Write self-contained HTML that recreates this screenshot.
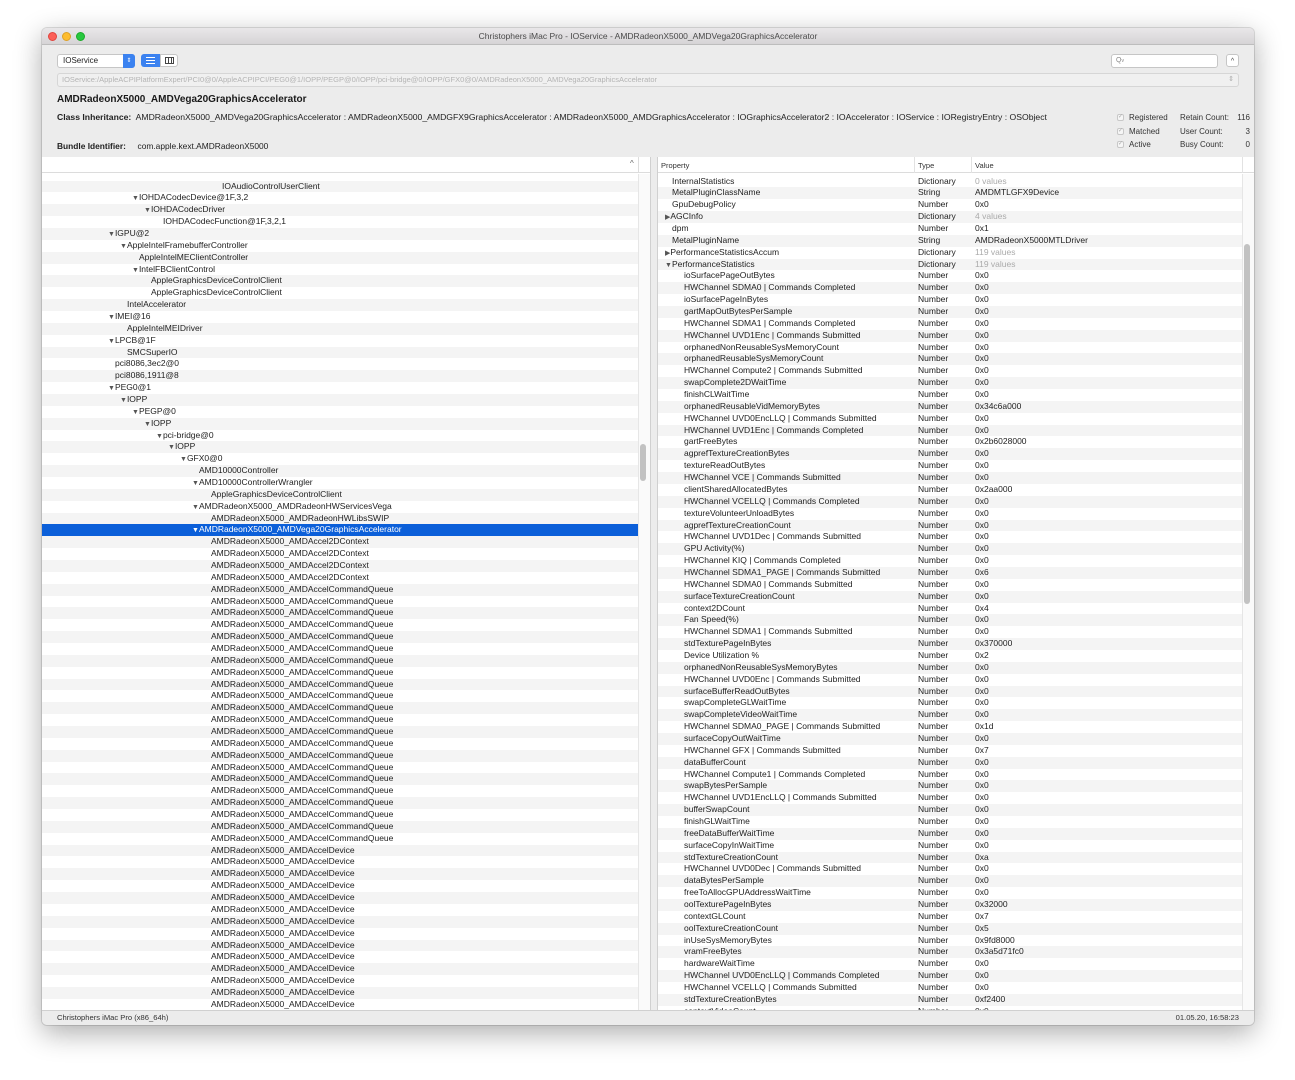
<!DOCTYPE html>
<html><head><meta charset="utf-8">
<style>
*{box-sizing:border-box}
body{margin:0;width:1295px;height:1080px;background:#fff;font-family:"Liberation Sans",sans-serif;overflow:hidden;position:relative}
.win{position:absolute;left:42px;top:28px;width:1212px;height:997px;border-radius:5px;background:#ececec;box-shadow:0 8px 28px rgba(0,0,0,.33),0 0 0 1px rgba(0,0,0,.12);overflow:hidden}
.tb{position:absolute;left:0;top:0;width:100%;height:17px;background:linear-gradient(#e9e7e9,#d6d4d6);border-bottom:1px solid #bdbdbd}
.dot{position:absolute;top:4px;width:9px;height:9px;border-radius:50%}
.ttl{position:absolute;left:0;right:0;top:3px;text-align:center;font-size:8.5px;color:#4a4a4a}
.a{position:absolute;white-space:nowrap}
.pane{position:absolute;top:129px;height:853px;background:#fff;overflow:hidden}
.hdr{position:absolute;left:0;top:0;width:100%;height:16px;background:#fff;border-bottom:1px solid #dcdcdc;font-size:7.5px;color:#333}
.rows{position:absolute;left:0;width:100%}
.r{height:11.87px;line-height:11.87px;font-size:8.5px;color:#222;white-space:nowrap;position:relative}
.r:nth-child(odd){background:#f4f4f4}
.r.sel{background:#0b5fd9 !important;color:#fff}
.r span{position:absolute}
.t{font-size:7px;color:#555;font-style:normal}
.sel .t{color:#fff}
.g{color:#aaa}
.ck{display:inline-block;width:7px;height:7px;border:1px solid #c8c8c8;border-radius:2px;background:#f6f6f6;font-size:6px;line-height:5px;color:#aaa;text-align:center;vertical-align:middle;margin-right:5px}
</style></head><body>
<div class="win">
 <div class="tb">
  <div class="dot" style="left:6px;background:#fc5f57;border:1px solid #e0443e"></div>
  <div class="dot" style="left:20px;background:#fdbc2e;border:1px solid #dea123"></div>
  <div class="dot" style="left:34px;background:#28c840;border:1px solid #1aab29"></div>
  <div class="ttl">Christophers iMac Pro - IOService - AMDRadeonX5000_AMDVega20GraphicsAccelerator</div>
 </div>
 <div class="a" style="left:15px;top:26px;width:78px;height:14px;background:#fff;border:1px solid #c6c6c6;border-radius:3px;font-size:8px;line-height:12px;padding-left:5px;color:#222">IOService</div>
 <div class="a" style="left:81px;top:26px;width:12px;height:14px;background:#3b82f0;border-radius:0 3px 3px 0;color:#fff;font-size:6px;line-height:14px;text-align:center">⇕</div>
 <div class="a" style="left:99px;top:26px;width:19px;height:13px;background:#3b82f0;border-radius:3px 0 0 3px;"><div style="position:absolute;left:5px;top:3px;width:9px;height:7px;border-top:1px solid #fff;border-bottom:1px solid #fff"><div style="margin-top:2px;border-top:1px solid #fff"></div></div></div>
 <div class="a" style="left:118px;top:26px;width:18px;height:13px;background:#fff;border:1px solid #c6c6c6;border-radius:0 3px 3px 0"><div style="position:absolute;left:4px;top:2px;width:9px;height:7px;border:1px solid #444"><div style="position:absolute;left:2px;top:0;height:5px;border-left:1px solid #444"></div><div style="position:absolute;left:5px;top:0;height:5px;border-left:1px solid #444"></div></div></div>
 <div class="a" style="left:15px;top:45px;width:1182px;height:14px;background:#f0f0f0;border:1px solid #d6d6d6;border-radius:3px;font-size:7.5px;line-height:12px;padding-left:4px;color:#b4b4b4">IOService:/AppleACPIPlatformExpert/PCI0@0/AppleACPIPCI/PEG0@1/IOPP/PEGP@0/IOPP/pci-bridge@0/IOPP/GFX0@0/AMDRadeonX5000_AMDVega20GraphicsAccelerator<span style="position:absolute;right:4px;color:#aaa;font-size:7px">⇕</span></div>
 <div class="a" style="left:1069px;top:26px;width:107px;height:14px;background:#fff;border:1px solid #c6c6c6;border-radius:3px;font-size:7px;line-height:12px;padding-left:4px;color:#888">Q<span style="font-size:5px">v</span></div>
 <div class="a" style="left:1184px;top:26px;width:13px;height:13px;background:#fff;border:1px solid #c6c6c6;border-radius:3px;font-size:7px;line-height:13px;text-align:center;color:#444">^</div>
 <div class="a" style="left:15px;top:66px;font-size:10px;font-weight:bold;color:#1a1a1a">AMDRadeonX5000_AMDVega20GraphicsAccelerator</div>
 <div class="a" style="left:15px;top:84px;font-size:8.65px;color:#222"><b>Class Inheritance:</b>&nbsp; AMDRadeonX5000_AMDVega20GraphicsAccelerator : AMDRadeonX5000_AMDGFX9GraphicsAccelerator : AMDRadeonX5000_AMDGraphicsAccelerator : IOGraphicsAccelerator2 : IOAccelerator : IOService : IORegistryEntry : OSObject</div>
 <div class="a" style="left:15px;top:113px;font-size:8.4px;color:#222"><b>Bundle Identifier:</b>&nbsp;&nbsp;&nbsp;&nbsp; com.apple.kext.AMDRadeonX5000</div>
 <div class="a" style="left:1075px;top:83px;font-size:8px;color:#333;line-height:13.5px"><span class="ck">✓</span>Registered<br><span class="ck">✓</span>Matched<br><span class="ck">✓</span>Active</div>
 <div class="a" style="left:1138px;top:83px;font-size:8px;color:#333;line-height:13.5px;width:70px">Retain Count:<span style="position:absolute;right:0">116</span><br>User Count:<span style="position:absolute;right:0;top:13.5px">3</span><br>Busy Count:<span style="position:absolute;right:0;top:27px">0</span></div>

 <div class="pane" style="left:0;width:608px">
  <div class="hdr"><span class="a" style="left:588px;top:2px;font-size:8px;color:#666">^</span><span class="a" style="left:596px;top:0;height:16px;border-left:1px solid #ddd"></span></div>
  <div class="a" style="left:596px;top:17px;width:12px;height:836px;background:#fafafa;border-left:1px solid #e6e6e6"></div>
  <div class="a" style="left:598px;top:287px;width:6px;height:37px;background:#c2c2c2;border-radius:3px"></div>
  <div style="position:absolute;left:0;top:17px;width:596px;height:836px;overflow:hidden">
  <div class="rows" style="top:6.5px">
<div class="r"><span style="left:180px">IOAudioControlUserClient</span></div>
<div class="r"><span style="left:90px"><i class="t">▼</i>IOHDACodecDevice@1F,3,2</span></div>
<div class="r"><span style="left:102px"><i class="t">▼</i>IOHDACodecDriver</span></div>
<div class="r"><span style="left:121px">IOHDACodecFunction@1F,3,2,1</span></div>
<div class="r"><span style="left:66px"><i class="t">▼</i>IGPU@2</span></div>
<div class="r"><span style="left:78px"><i class="t">▼</i>AppleIntelFramebufferController</span></div>
<div class="r"><span style="left:97px">AppleIntelMEClientController</span></div>
<div class="r"><span style="left:90px"><i class="t">▼</i>IntelFBClientControl</span></div>
<div class="r"><span style="left:109px">AppleGraphicsDeviceControlClient</span></div>
<div class="r"><span style="left:109px">AppleGraphicsDeviceControlClient</span></div>
<div class="r"><span style="left:85px">IntelAccelerator</span></div>
<div class="r"><span style="left:66px"><i class="t">▼</i>IMEI@16</span></div>
<div class="r"><span style="left:85px">AppleIntelMEIDriver</span></div>
<div class="r"><span style="left:66px"><i class="t">▼</i>LPCB@1F</span></div>
<div class="r"><span style="left:85px">SMCSuperIO</span></div>
<div class="r"><span style="left:73px">pci8086,3ec2@0</span></div>
<div class="r"><span style="left:73px">pci8086,1911@8</span></div>
<div class="r"><span style="left:66px"><i class="t">▼</i>PEG0@1</span></div>
<div class="r"><span style="left:78px"><i class="t">▼</i>IOPP</span></div>
<div class="r"><span style="left:90px"><i class="t">▼</i>PEGP@0</span></div>
<div class="r"><span style="left:102px"><i class="t">▼</i>IOPP</span></div>
<div class="r"><span style="left:114px"><i class="t">▼</i>pci-bridge@0</span></div>
<div class="r"><span style="left:126px"><i class="t">▼</i>IOPP</span></div>
<div class="r"><span style="left:138px"><i class="t">▼</i>GFX0@0</span></div>
<div class="r"><span style="left:157px">AMD10000Controller</span></div>
<div class="r"><span style="left:150px"><i class="t">▼</i>AMD10000ControllerWrangler</span></div>
<div class="r"><span style="left:169px">AppleGraphicsDeviceControlClient</span></div>
<div class="r"><span style="left:150px"><i class="t">▼</i>AMDRadeonX5000_AMDRadeonHWServicesVega</span></div>
<div class="r"><span style="left:169px">AMDRadeonX5000_AMDRadeonHWLibsSWIP</span></div>
<div class="r sel"><span style="left:150px"><i class="t">▼</i>AMDRadeonX5000_AMDVega20GraphicsAccelerator</span></div>
<div class="r"><span style="left:169px">AMDRadeonX5000_AMDAccel2DContext</span></div>
<div class="r"><span style="left:169px">AMDRadeonX5000_AMDAccel2DContext</span></div>
<div class="r"><span style="left:169px">AMDRadeonX5000_AMDAccel2DContext</span></div>
<div class="r"><span style="left:169px">AMDRadeonX5000_AMDAccel2DContext</span></div>
<div class="r"><span style="left:169px">AMDRadeonX5000_AMDAccelCommandQueue</span></div>
<div class="r"><span style="left:169px">AMDRadeonX5000_AMDAccelCommandQueue</span></div>
<div class="r"><span style="left:169px">AMDRadeonX5000_AMDAccelCommandQueue</span></div>
<div class="r"><span style="left:169px">AMDRadeonX5000_AMDAccelCommandQueue</span></div>
<div class="r"><span style="left:169px">AMDRadeonX5000_AMDAccelCommandQueue</span></div>
<div class="r"><span style="left:169px">AMDRadeonX5000_AMDAccelCommandQueue</span></div>
<div class="r"><span style="left:169px">AMDRadeonX5000_AMDAccelCommandQueue</span></div>
<div class="r"><span style="left:169px">AMDRadeonX5000_AMDAccelCommandQueue</span></div>
<div class="r"><span style="left:169px">AMDRadeonX5000_AMDAccelCommandQueue</span></div>
<div class="r"><span style="left:169px">AMDRadeonX5000_AMDAccelCommandQueue</span></div>
<div class="r"><span style="left:169px">AMDRadeonX5000_AMDAccelCommandQueue</span></div>
<div class="r"><span style="left:169px">AMDRadeonX5000_AMDAccelCommandQueue</span></div>
<div class="r"><span style="left:169px">AMDRadeonX5000_AMDAccelCommandQueue</span></div>
<div class="r"><span style="left:169px">AMDRadeonX5000_AMDAccelCommandQueue</span></div>
<div class="r"><span style="left:169px">AMDRadeonX5000_AMDAccelCommandQueue</span></div>
<div class="r"><span style="left:169px">AMDRadeonX5000_AMDAccelCommandQueue</span></div>
<div class="r"><span style="left:169px">AMDRadeonX5000_AMDAccelCommandQueue</span></div>
<div class="r"><span style="left:169px">AMDRadeonX5000_AMDAccelCommandQueue</span></div>
<div class="r"><span style="left:169px">AMDRadeonX5000_AMDAccelCommandQueue</span></div>
<div class="r"><span style="left:169px">AMDRadeonX5000_AMDAccelCommandQueue</span></div>
<div class="r"><span style="left:169px">AMDRadeonX5000_AMDAccelCommandQueue</span></div>
<div class="r"><span style="left:169px">AMDRadeonX5000_AMDAccelCommandQueue</span></div>
<div class="r"><span style="left:169px">AMDRadeonX5000_AMDAccelDevice</span></div>
<div class="r"><span style="left:169px">AMDRadeonX5000_AMDAccelDevice</span></div>
<div class="r"><span style="left:169px">AMDRadeonX5000_AMDAccelDevice</span></div>
<div class="r"><span style="left:169px">AMDRadeonX5000_AMDAccelDevice</span></div>
<div class="r"><span style="left:169px">AMDRadeonX5000_AMDAccelDevice</span></div>
<div class="r"><span style="left:169px">AMDRadeonX5000_AMDAccelDevice</span></div>
<div class="r"><span style="left:169px">AMDRadeonX5000_AMDAccelDevice</span></div>
<div class="r"><span style="left:169px">AMDRadeonX5000_AMDAccelDevice</span></div>
<div class="r"><span style="left:169px">AMDRadeonX5000_AMDAccelDevice</span></div>
<div class="r"><span style="left:169px">AMDRadeonX5000_AMDAccelDevice</span></div>
<div class="r"><span style="left:169px">AMDRadeonX5000_AMDAccelDevice</span></div>
<div class="r"><span style="left:169px">AMDRadeonX5000_AMDAccelDevice</span></div>
<div class="r"><span style="left:169px">AMDRadeonX5000_AMDAccelDevice</span></div>
<div class="r"><span style="left:169px">AMDRadeonX5000_AMDAccelDevice</span></div>
  </div></div>
 </div>
 <div class="a" style="left:608px;top:129px;width:8px;height:853px;background:#ececec;border-left:1px solid #d0d0d0;border-right:1px solid #d0d0d0"></div>

 <div class="pane" style="left:616px;width:596px">
  <div class="hdr"><span class="a" style="left:3px;top:4px">Property</span><span class="a" style="left:256px;top:0;height:16px;border-left:1px solid #e2e2e2"></span><span class="a" style="left:260px;top:4px">Type</span><span class="a" style="left:313px;top:0;height:16px;border-left:1px solid #e2e2e2"></span><span class="a" style="left:317px;top:4px">Value</span><span class="a" style="left:584px;top:0;height:16px;border-left:1px solid #e2e2e2"></span></div>
  <div class="a" style="left:584px;top:17px;width:12px;height:836px;background:#fafafa;border-left:1px solid #e6e6e6"></div>
  <div class="a" style="left:586px;top:87px;width:6px;height:360px;background:#c2c2c2;border-radius:3px"></div>
  <div style="position:absolute;left:0;top:17px;width:584px;height:836px;overflow:hidden">
  <div class="rows" style="top:1.5px">
<div class="r" style="background:#fff"><span style="left:14px">InternalStatistics</span><span style="left:260px">Dictionary</span><span class="g" style="left:317px">0 values</span></div>
<div class="r" style="background:#f4f4f4"><span style="left:14px">MetalPluginClassName</span><span style="left:260px">String</span><span style="left:317px">AMDMTLGFX9Device</span></div>
<div class="r" style="background:#fff"><span style="left:14px">GpuDebugPolicy</span><span style="left:260px">Number</span><span style="left:317px">0x0</span></div>
<div class="r" style="background:#f4f4f4"><span style="left:7px"><i class="t">▶</i>AGCInfo</span><span style="left:260px">Dictionary</span><span class="g" style="left:317px">4 values</span></div>
<div class="r" style="background:#fff"><span style="left:14px">dpm</span><span style="left:260px">Number</span><span style="left:317px">0x1</span></div>
<div class="r" style="background:#f4f4f4"><span style="left:14px">MetalPluginName</span><span style="left:260px">String</span><span style="left:317px">AMDRadeonX5000MTLDriver</span></div>
<div class="r" style="background:#fff"><span style="left:7px"><i class="t">▶</i>PerformanceStatisticsAccum</span><span style="left:260px">Dictionary</span><span class="g" style="left:317px">119 values</span></div>
<div class="r" style="background:#f4f4f4"><span style="left:7px"><i class="t">▼</i>PerformanceStatistics</span><span style="left:260px">Dictionary</span><span class="g" style="left:317px">119 values</span></div>
  </div>
  <div class="rows" style="top:96.46px">
<div class="r" style="background:#fff"><span style="left:26px">ioSurfacePageOutBytes</span><span style="left:260px">Number</span><span style="left:317px">0x0</span></div>
<div class="r" style="background:#f4f4f4"><span style="left:26px">HWChannel SDMA0 | Commands Completed</span><span style="left:260px">Number</span><span style="left:317px">0x0</span></div>
<div class="r" style="background:#fff"><span style="left:26px">ioSurfacePageInBytes</span><span style="left:260px">Number</span><span style="left:317px">0x0</span></div>
<div class="r" style="background:#f4f4f4"><span style="left:26px">gartMapOutBytesPerSample</span><span style="left:260px">Number</span><span style="left:317px">0x0</span></div>
<div class="r" style="background:#fff"><span style="left:26px">HWChannel SDMA1 | Commands Completed</span><span style="left:260px">Number</span><span style="left:317px">0x0</span></div>
<div class="r" style="background:#f4f4f4"><span style="left:26px">HWChannel UVD1Enc | Commands Submitted</span><span style="left:260px">Number</span><span style="left:317px">0x0</span></div>
<div class="r" style="background:#fff"><span style="left:26px">orphanedNonReusableSysMemoryCount</span><span style="left:260px">Number</span><span style="left:317px">0x0</span></div>
<div class="r" style="background:#f4f4f4"><span style="left:26px">orphanedReusableSysMemoryCount</span><span style="left:260px">Number</span><span style="left:317px">0x0</span></div>
<div class="r" style="background:#fff"><span style="left:26px">HWChannel Compute2 | Commands Submitted</span><span style="left:260px">Number</span><span style="left:317px">0x0</span></div>
<div class="r" style="background:#f4f4f4"><span style="left:26px">swapComplete2DWaitTime</span><span style="left:260px">Number</span><span style="left:317px">0x0</span></div>
<div class="r" style="background:#fff"><span style="left:26px">finishCLWaitTime</span><span style="left:260px">Number</span><span style="left:317px">0x0</span></div>
<div class="r" style="background:#f4f4f4"><span style="left:26px">orphanedReusableVidMemoryBytes</span><span style="left:260px">Number</span><span style="left:317px">0x34c6a000</span></div>
<div class="r" style="background:#fff"><span style="left:26px">HWChannel UVD0EncLLQ | Commands Submitted</span><span style="left:260px">Number</span><span style="left:317px">0x0</span></div>
<div class="r" style="background:#f4f4f4"><span style="left:26px">HWChannel UVD1Enc | Commands Completed</span><span style="left:260px">Number</span><span style="left:317px">0x0</span></div>
<div class="r" style="background:#fff"><span style="left:26px">gartFreeBytes</span><span style="left:260px">Number</span><span style="left:317px">0x2b6028000</span></div>
<div class="r" style="background:#f4f4f4"><span style="left:26px">agprefTextureCreationBytes</span><span style="left:260px">Number</span><span style="left:317px">0x0</span></div>
<div class="r" style="background:#fff"><span style="left:26px">textureReadOutBytes</span><span style="left:260px">Number</span><span style="left:317px">0x0</span></div>
<div class="r" style="background:#f4f4f4"><span style="left:26px">HWChannel VCE | Commands Submitted</span><span style="left:260px">Number</span><span style="left:317px">0x0</span></div>
<div class="r" style="background:#fff"><span style="left:26px">clientSharedAllocatedBytes</span><span style="left:260px">Number</span><span style="left:317px">0x2aa000</span></div>
<div class="r" style="background:#f4f4f4"><span style="left:26px">HWChannel VCELLQ | Commands Completed</span><span style="left:260px">Number</span><span style="left:317px">0x0</span></div>
<div class="r" style="background:#fff"><span style="left:26px">textureVolunteerUnloadBytes</span><span style="left:260px">Number</span><span style="left:317px">0x0</span></div>
<div class="r" style="background:#f4f4f4"><span style="left:26px">agprefTextureCreationCount</span><span style="left:260px">Number</span><span style="left:317px">0x0</span></div>
<div class="r" style="background:#fff"><span style="left:26px">HWChannel UVD1Dec | Commands Submitted</span><span style="left:260px">Number</span><span style="left:317px">0x0</span></div>
<div class="r" style="background:#f4f4f4"><span style="left:26px">GPU Activity(%)</span><span style="left:260px">Number</span><span style="left:317px">0x0</span></div>
<div class="r" style="background:#fff"><span style="left:26px">HWChannel KIQ | Commands Completed</span><span style="left:260px">Number</span><span style="left:317px">0x0</span></div>
<div class="r" style="background:#f4f4f4"><span style="left:26px">HWChannel SDMA1_PAGE | Commands Submitted</span><span style="left:260px">Number</span><span style="left:317px">0x6</span></div>
<div class="r" style="background:#fff"><span style="left:26px">HWChannel SDMA0 | Commands Submitted</span><span style="left:260px">Number</span><span style="left:317px">0x0</span></div>
<div class="r" style="background:#f4f4f4"><span style="left:26px">surfaceTextureCreationCount</span><span style="left:260px">Number</span><span style="left:317px">0x0</span></div>
<div class="r" style="background:#fff"><span style="left:26px">context2DCount</span><span style="left:260px">Number</span><span style="left:317px">0x4</span></div>
<div class="r" style="background:#f4f4f4"><span style="left:26px">Fan Speed(%)</span><span style="left:260px">Number</span><span style="left:317px">0x0</span></div>
<div class="r" style="background:#fff"><span style="left:26px">HWChannel SDMA1 | Commands Submitted</span><span style="left:260px">Number</span><span style="left:317px">0x0</span></div>
<div class="r" style="background:#f4f4f4"><span style="left:26px">stdTexturePageInBytes</span><span style="left:260px">Number</span><span style="left:317px">0x370000</span></div>
<div class="r" style="background:#fff"><span style="left:26px">Device Utilization %</span><span style="left:260px">Number</span><span style="left:317px">0x2</span></div>
<div class="r" style="background:#f4f4f4"><span style="left:26px">orphanedNonReusableSysMemoryBytes</span><span style="left:260px">Number</span><span style="left:317px">0x0</span></div>
<div class="r" style="background:#fff"><span style="left:26px">HWChannel UVD0Enc | Commands Submitted</span><span style="left:260px">Number</span><span style="left:317px">0x0</span></div>
<div class="r" style="background:#f4f4f4"><span style="left:26px">surfaceBufferReadOutBytes</span><span style="left:260px">Number</span><span style="left:317px">0x0</span></div>
<div class="r" style="background:#fff"><span style="left:26px">swapCompleteGLWaitTime</span><span style="left:260px">Number</span><span style="left:317px">0x0</span></div>
<div class="r" style="background:#f4f4f4"><span style="left:26px">swapCompleteVideoWaitTime</span><span style="left:260px">Number</span><span style="left:317px">0x0</span></div>
<div class="r" style="background:#fff"><span style="left:26px">HWChannel SDMA0_PAGE | Commands Submitted</span><span style="left:260px">Number</span><span style="left:317px">0x1d</span></div>
<div class="r" style="background:#f4f4f4"><span style="left:26px">surfaceCopyOutWaitTime</span><span style="left:260px">Number</span><span style="left:317px">0x0</span></div>
<div class="r" style="background:#fff"><span style="left:26px">HWChannel GFX | Commands Submitted</span><span style="left:260px">Number</span><span style="left:317px">0x7</span></div>
<div class="r" style="background:#f4f4f4"><span style="left:26px">dataBufferCount</span><span style="left:260px">Number</span><span style="left:317px">0x0</span></div>
<div class="r" style="background:#fff"><span style="left:26px">HWChannel Compute1 | Commands Completed</span><span style="left:260px">Number</span><span style="left:317px">0x0</span></div>
<div class="r" style="background:#f4f4f4"><span style="left:26px">swapBytesPerSample</span><span style="left:260px">Number</span><span style="left:317px">0x0</span></div>
<div class="r" style="background:#fff"><span style="left:26px">HWChannel UVD1EncLLQ | Commands Submitted</span><span style="left:260px">Number</span><span style="left:317px">0x0</span></div>
<div class="r" style="background:#f4f4f4"><span style="left:26px">bufferSwapCount</span><span style="left:260px">Number</span><span style="left:317px">0x0</span></div>
<div class="r" style="background:#fff"><span style="left:26px">finishGLWaitTime</span><span style="left:260px">Number</span><span style="left:317px">0x0</span></div>
<div class="r" style="background:#f4f4f4"><span style="left:26px">freeDataBufferWaitTime</span><span style="left:260px">Number</span><span style="left:317px">0x0</span></div>
<div class="r" style="background:#fff"><span style="left:26px">surfaceCopyInWaitTime</span><span style="left:260px">Number</span><span style="left:317px">0x0</span></div>
<div class="r" style="background:#f4f4f4"><span style="left:26px">stdTextureCreationCount</span><span style="left:260px">Number</span><span style="left:317px">0xa</span></div>
<div class="r" style="background:#fff"><span style="left:26px">HWChannel UVD0Dec | Commands Submitted</span><span style="left:260px">Number</span><span style="left:317px">0x0</span></div>
<div class="r" style="background:#f4f4f4"><span style="left:26px">dataBytesPerSample</span><span style="left:260px">Number</span><span style="left:317px">0x0</span></div>
<div class="r" style="background:#fff"><span style="left:26px">freeToAllocGPUAddressWaitTime</span><span style="left:260px">Number</span><span style="left:317px">0x0</span></div>
<div class="r" style="background:#f4f4f4"><span style="left:26px">oolTexturePageInBytes</span><span style="left:260px">Number</span><span style="left:317px">0x32000</span></div>
<div class="r" style="background:#fff"><span style="left:26px">contextGLCount</span><span style="left:260px">Number</span><span style="left:317px">0x7</span></div>
<div class="r" style="background:#f4f4f4"><span style="left:26px">oolTextureCreationCount</span><span style="left:260px">Number</span><span style="left:317px">0x5</span></div>
<div class="r" style="background:#fff"><span style="left:26px">inUseSysMemoryBytes</span><span style="left:260px">Number</span><span style="left:317px">0x9fd8000</span></div>
<div class="r" style="background:#f4f4f4"><span style="left:26px">vramFreeBytes</span><span style="left:260px">Number</span><span style="left:317px">0x3a5d71fc0</span></div>
<div class="r" style="background:#fff"><span style="left:26px">hardwareWaitTime</span><span style="left:260px">Number</span><span style="left:317px">0x0</span></div>
<div class="r" style="background:#f4f4f4"><span style="left:26px">HWChannel UVD0EncLLQ | Commands Completed</span><span style="left:260px">Number</span><span style="left:317px">0x0</span></div>
<div class="r" style="background:#fff"><span style="left:26px">HWChannel VCELLQ | Commands Submitted</span><span style="left:260px">Number</span><span style="left:317px">0x0</span></div>
<div class="r" style="background:#f4f4f4"><span style="left:26px">stdTextureCreationBytes</span><span style="left:260px">Number</span><span style="left:317px">0xf2400</span></div>
<div class="r" style="background:#fff"><span style="left:26px">contextVideoCount</span><span style="left:260px">Number</span><span style="left:317px">0x0</span></div>
  </div></div>
 </div>
 <div class="a" style="left:0;top:982px;width:1212px;height:15px;background:#ececec;border-top:1px solid #d0d0d0"></div>
 <div class="a" style="left:15px;top:985px;font-size:7.6px;color:#333">Christophers iMac Pro (x86_64h)</div>
 <div class="a" style="right:15px;top:985px;font-size:7.6px;color:#333">01.05.20, 16:58:23</div>
</div>
</body></html>
